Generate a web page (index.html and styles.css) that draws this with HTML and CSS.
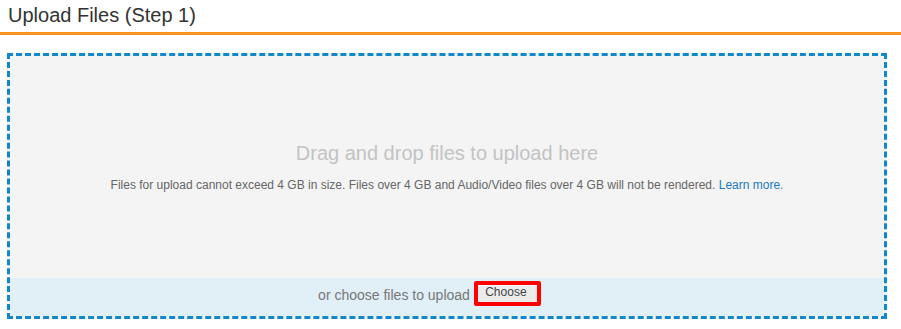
FILE: index.html
```html
<!DOCTYPE html>
<html lang="en">
<head>
  <meta charset="UTF-8">
  <meta name="viewport" content="width=device-width, initial-scale=1.0">
  <title>Upload Files</title>
  <link rel="stylesheet" href="styles.css">
</head>
<body>
  <div class="page-title">
    <h1>Upload Files (Step 1)</h1>
  </div>
  <div class="upload-box">
    <div class="drop-zone">
      <p class="drop-title">Drag and drop files to upload here</p>
      <p class="drop-note">Files for upload cannot exceed 4 GB in size. Files over 4 GB and Audio/Video files over 4 GB will not be rendered. <a href="#">Learn more</a>.</p>
    </div>
    <div class="choose-bar">
      <span class="choose-label">or choose files to upload</span>
      <button class="choose-btn" type="button">Choose</button>
    </div>
  </div>
</body>
</html>
```

FILE: styles.css
```css
body, html {
  padding: 0;
  margin: 0;
}
body {
  background-color: white;
  font-family: "Liberation Sans", Arial, sans-serif;
}
.page-title {
  padding: 4px 8px 5px 8px;
  border-bottom: 3px solid #f7941d;
}
.page-title h1 {
  margin: 0;
  font-size: 20px;
  font-weight: normal;
  line-height: 23px;
  color: #333;
}
.upload-box {
  margin: 18px 14px 0 7px;
  height: 260px;
  border: 3px dashed #1188cc;
  background-color: #f4f4f4;
  display: flex;
  flex-direction: column;
}
.drop-zone {
  flex-grow: 1;
  display: flex;
  flex-direction: column;
  justify-content: center;
  align-items: center;
  text-align: center;
}
.drop-title {
  margin: 0 0 13px 0;
  font-size: 20px;
  line-height: 23px;
  color: #c3c3c3;
}
.drop-note {
  margin: 0;
  font-size: 12px;
  line-height: 14px;
  color: #666;
}
.drop-note a {
  color: #1a7bbf;
  text-decoration: none;
}
.choose-bar {
  height: 38px;
  background-color: #e1eff7;
  display: flex;
  justify-content: center;
  align-items: center;
  gap: 4px;
  padding-right: 35px;
}
.choose-label {
  font-size: 14px;
  line-height: 16px;
  color: #777;
  margin-bottom: 4px;
}
.choose-btn {
  font-family: "Liberation Sans", Arial, sans-serif;
  font-size: 12px;
  color: #444;
  width: 67px;
  height: 25px;
  padding: 0 3px 3px 0;
  border: 4px solid #ff0000;
  border-radius: 2px;
  background-color: #ececec;
  box-shadow: inset 0 1px 0 #f8f8f8;
  margin-bottom: 7px;
}
```
